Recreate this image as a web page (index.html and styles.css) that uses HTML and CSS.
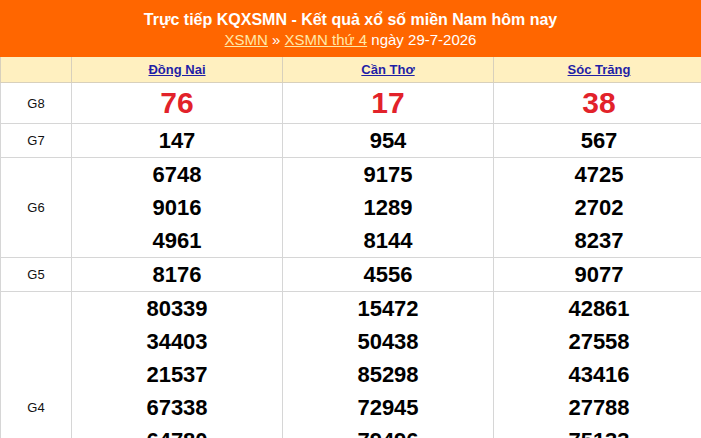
FILE: index.html
```html
<!DOCTYPE html>
<html lang="vi">
<head>
<meta charset="utf-8">
<title>KQXSMN</title>
<link rel="stylesheet" href="styles.css">
</head>
<body>
<div class="board">
  <div class="title">
    <h2 class="title-main">Trực tiếp KQXSMN - Kết quả xổ số miền Nam hôm nay</h2>
    <div class="title-sub"><a href="#">XSMN</a> » <a href="#">XSMN thứ 4</a> ngày 29-7-2026</div>
  </div>
  <table class="results">
    <colgroup>
      <col class="c-prize"><col class="c-prov"><col class="c-prov"><col class="c-prov">
    </colgroup>
    <thead>
      <tr>
        <th></th>
        <th><a href="#">Đồng Nai</a></th>
        <th><a href="#">Cần Thơ</a></th>
        <th><a href="#">Sóc Trăng</a></th>
      </tr>
    </thead>
    <tbody>
      <tr class="g8">
        <td class="prize">G8</td>
        <td><div class="num">76</div></td>
        <td><div class="num">17</div></td>
        <td><div class="num">38</div></td>
      </tr>
      <tr>
        <td class="prize">G7</td>
        <td><div class="num">147</div></td>
        <td><div class="num">954</div></td>
        <td><div class="num">567</div></td>
      </tr>
      <tr>
        <td class="prize">G6</td>
        <td><div class="num">6748</div><div class="num">9016</div><div class="num">4961</div></td>
        <td><div class="num">9175</div><div class="num">1289</div><div class="num">8144</div></td>
        <td><div class="num">4725</div><div class="num">2702</div><div class="num">8237</div></td>
      </tr>
      <tr>
        <td class="prize">G5</td>
        <td><div class="num">8176</div></td>
        <td><div class="num">4556</div></td>
        <td><div class="num">9077</div></td>
      </tr>
      <tr>
        <td class="prize">G4</td>
        <td><div class="num">80339</div><div class="num">34403</div><div class="num">21537</div><div class="num">67338</div><div class="num">64780</div><div class="num">11209</div><div class="num">50921</div></td>
        <td><div class="num">15472</div><div class="num">50438</div><div class="num">85298</div><div class="num">72945</div><div class="num">79496</div><div class="num">30184</div><div class="num">62017</div></td>
        <td><div class="num">42861</div><div class="num">27558</div><div class="num">43416</div><div class="num">27788</div><div class="num">75133</div><div class="num">08452</div><div class="num">91376</div></td>
      </tr>
    </tbody>
  </table>
</div>
</body>
</html>
```
FILE: styles.css
```css
html, body {
  margin: 0;
  padding: 0;
  overflow: hidden;
  background: #fff;
}
body {
  font-family: "Liberation Sans", Arial, sans-serif;
  color: #000;
}
.board {
  width: 704px;
}
.title {
  background: #ff6600;
  height: 57px;
  box-sizing: border-box;
  padding-top: 10px;
  text-align: center;
  width: 701px;
}
.title-main {
  margin: 0;
  font-size: 16px;
  font-weight: bold;
  color: #fff;
  line-height: 20px;
}
.title-sub {
  font-size: 15px;
  line-height: 20px;
  color: #fff;
}
.title-sub a {
  color: #ffe9a8;
  text-decoration: underline;
}
.results {
  width: 704px;
  border-collapse: collapse;
  table-layout: fixed;
}
.c-prize { width: 71px; }
.c-prov { width: 211px; }
.results th {
  background: #fff0c0;
  height: 25px;
  border: 1px solid #d8d0bc;
  border-top: none;
  padding: 0;
  font-size: 13px;
  font-weight: bold;
}
.results th a {
  color: #1f1fa6;
  text-decoration: underline;
}
.results td {
  border: 1px solid #d6d6d6;
  padding: 0;
  text-align: center;
  vertical-align: middle;
}
.results td.prize {
  font-size: 13px;
  color: #111;
}
.num {
  font-size: 22px;
  font-weight: bold;
  line-height: 33px;
}
.g8 .num {
  font-size: 30px;
  line-height: 40px;
  color: #e2222a;
}
```
